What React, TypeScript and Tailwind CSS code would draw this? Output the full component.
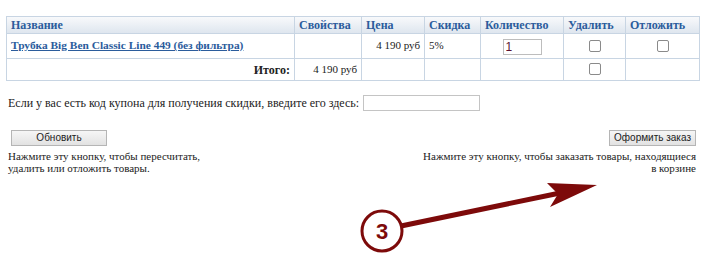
import React from 'react';

const serif = "font-['Liberation_Serif','Times_New_Roman',serif]";

export default function App() {
  const headers = [
    { label: 'Название', w: 'w-[288px]' },
    { label: 'Свойства', w: 'w-[67px]' },
    { label: 'Цена', w: 'w-[63px]' },
    { label: 'Скидка', w: 'w-[56px]' },
    { label: 'Количество', w: 'w-[83px]' },
    { label: 'Удалить', w: 'w-[62px]' },
    { label: 'Отложить', w: 'w-[74px]' },
  ];

  const cell = 'border border-[#c8d5e3] px-[4px] align-top';
  const box = 'inline-block w-[12px] h-[12px] border border-[#8a8a8a] rounded-[2px] bg-white';

  return (
    <div className={`relative w-[705px] h-[261px] bg-white text-[#222] ${serif}`}>
      <div className="pt-4 px-[6px]">
        {/* Cart table */}
        <table className="w-[693px] border-collapse table-fixed text-[12px]">
          <thead>
            <tr className="h-[17px] bg-gradient-to-b from-[#f8f9fb] to-[#dde5ee]">
              {headers.map((h, i) => (
                <th
                  key={i}
                  className={`${h.w} border border-[#c8d5e3] px-[4px] text-left font-bold text-[#2b5c9c] leading-[15px]`}
                >
                  {h.label}
                </th>
              ))}
            </tr>
          </thead>
          <tbody>
            <tr className="h-[25px]">
              <td className={`${cell} pt-[2px]`}>
                <a href="#" className="font-bold text-[11.4px] text-[#2b5c9c] underline">
                  Трубка Big Ben Classic Line 449 (без фильтра)
                </a>
              </td>
              <td className={cell}></td>
              <td className={`${cell} pt-[3px] text-right text-[11px]`}>4 190 руб</td>
              <td className={`${cell} pt-[3px] text-[11px]`}>5%</td>
              <td className={`${cell} pt-[4px] text-center`}>
                <input
                  defaultValue="1"
                  className="w-[39px] h-[16px] border border-[#bdbdbd] px-[2px] text-[12px] leading-[14px] text-[#5a1030] font-['Liberation_Sans',Arial,sans-serif] outline-none"
                />
              </td>
              <td className={`${cell} pt-[5px] text-center`}>
                <span className={box}></span>
              </td>
              <td className={`${cell} pt-[5px] text-center`}>
                <span className={box}></span>
              </td>
            </tr>
            <tr className="h-[20px]">
              <td className={`${cell} text-right font-bold pt-[2px]`}>Итого:</td>
              <td className={`${cell} text-right text-[11px] pt-[2px]`}>4 190 руб</td>
              <td className={cell}></td>
              <td className={cell}></td>
              <td className={cell}></td>
              <td className={`${cell} pt-[3px] text-center`}>
                <span className={box}></span>
              </td>
              <td className={cell}></td>
            </tr>
          </tbody>
        </table>

        {/* Coupon */}
        <div className="mt-[13px] flex items-center gap-[4px] pl-[2px] text-[12px]">
          <span>Если у вас есть код купона для получения скидки, введите его здесь:</span>
          <input className="w-[117px] h-[16px] border border-[#c4c4c4] outline-none" />
        </div>

        {/* Buttons */}
        <div className="mt-[18px] flex justify-between text-[11px] leading-[12px]">
          <div className="pl-[2px]">
            <button className="ml-[3px] w-[96px] h-[16px] border border-[#b5b5b5] bg-gradient-to-b from-[#f6f6f6] to-[#e2e2e2] text-[10px] leading-[14px] font-['Liberation_Sans',Arial,sans-serif]">
              Обновить
            </button>
            <p className="mt-[4px]">
              Нажмите эту кнопку, чтобы пересчитать,
              <br />
              удалить или отложить товары.
            </p>
          </div>
          <div className="flex flex-col items-end pr-[3px] text-right">
            <button className="h-[16px] px-[4px] whitespace-nowrap border border-[#b5b5b5] bg-gradient-to-b from-[#f6f6f6] to-[#e2e2e2] text-[10px] leading-[14px] font-['Liberation_Sans',Arial,sans-serif]">
              Оформить заказ
            </button>
            <p className="mt-[4px]">
              Нажмите эту кнопку, чтобы заказать товары, находящиеся
              <br />
              в корзине
            </p>
          </div>
        </div>
      </div>

      {/* Annotation arrow */}
      <svg className="absolute left-0 top-0" width="705" height="261" viewBox="0 0 705 261">
        <line x1="401" y1="226" x2="560" y2="193" stroke="#7d0a0a" strokeWidth="5" />
        <path d="M597 185 L547 183 L558 194 L550 207 Z" fill="#7d0a0a" />
        <circle cx="382" cy="231" r="20" fill="white" stroke="#7d0a0a" strokeWidth="3" />
        <text
          x="382"
          y="239"
          textAnchor="middle"
          fontSize="22"
          fontWeight="600"
          fill="#7d0a0a"
          fontFamily="'Liberation Sans', Arial, sans-serif"
        >
          3
        </text>
      </svg>
    </div>
  );
}
